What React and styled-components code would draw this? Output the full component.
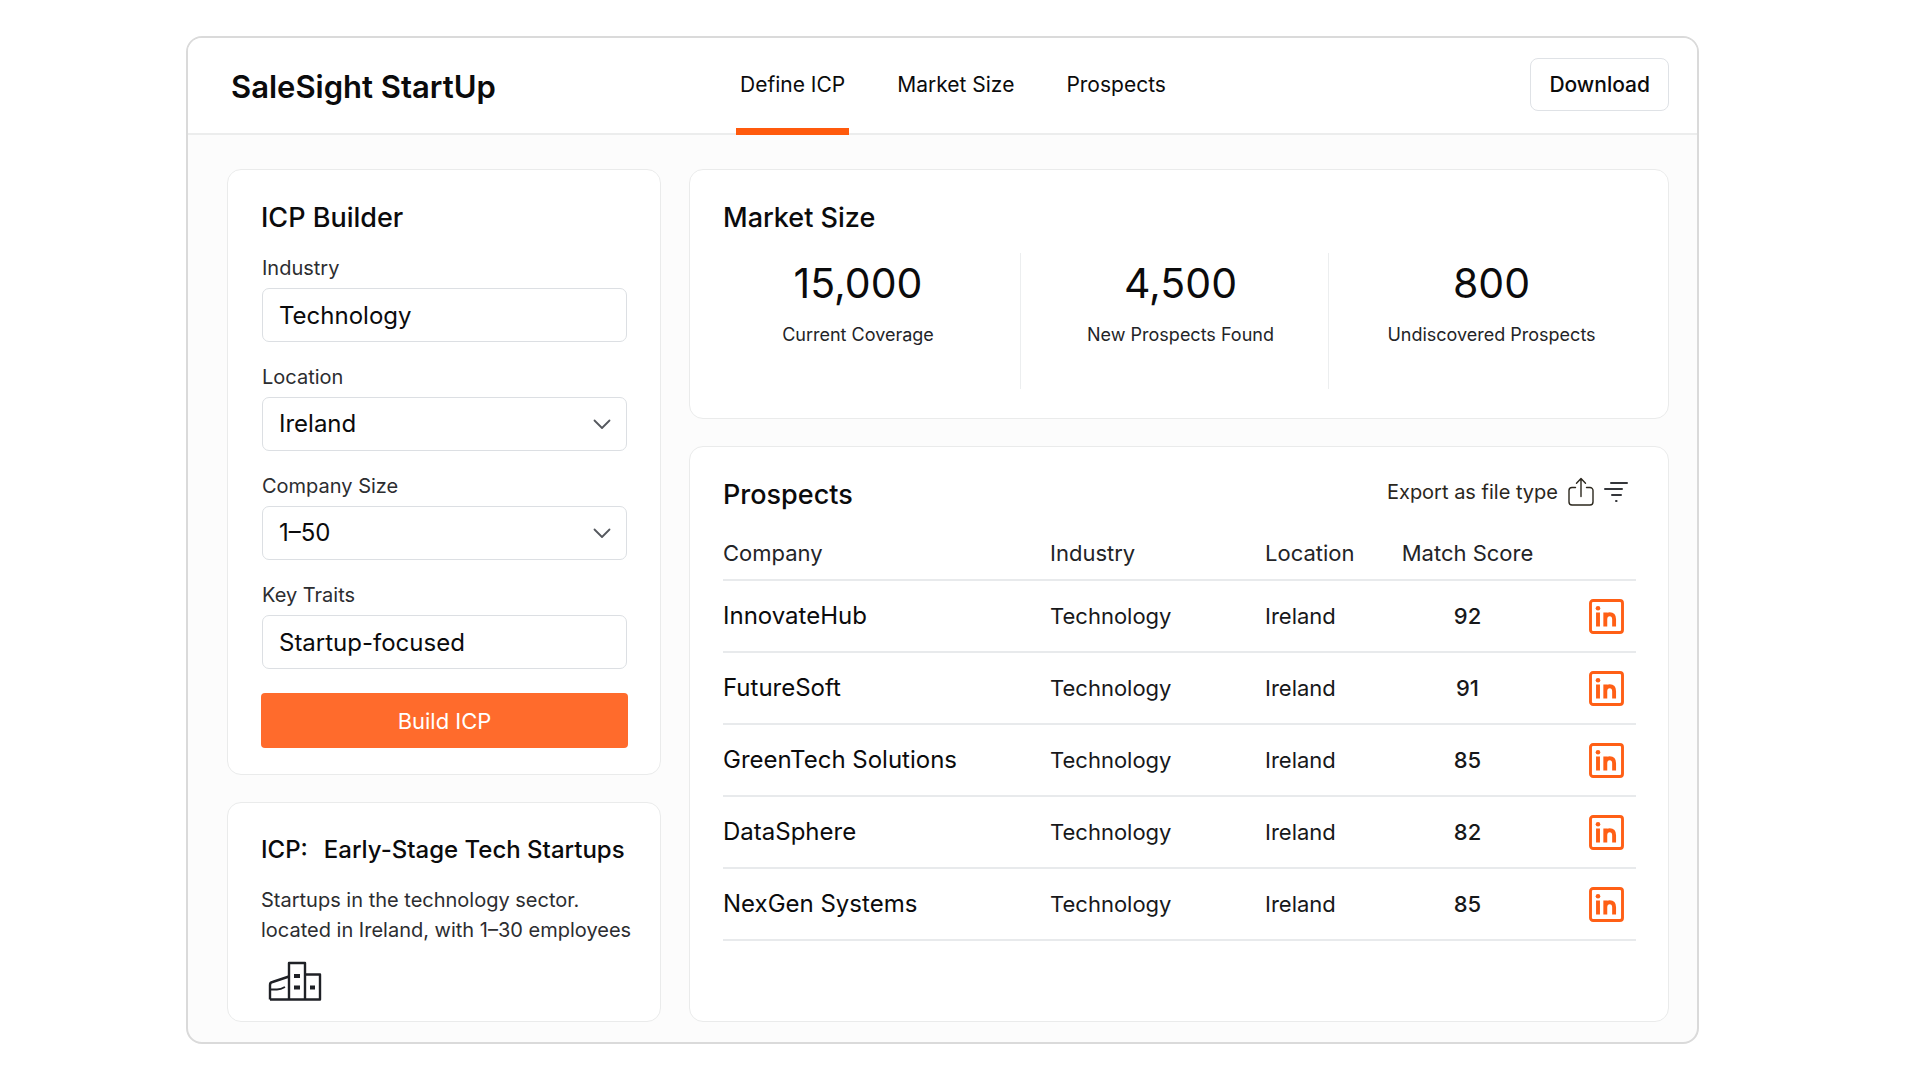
import React, { useState } from 'react';
import styled, { createGlobalStyle } from 'styled-components';

const GlobalStyle = createGlobalStyle`
	* {
		box-sizing: border-box;
	}
	body {
		margin: 0;
		background: #fff;
		color: #0b0b0c;
		font-family: Inter, 'Liberation Sans', sans-serif;
		font-size: 20px;
		line-height: 28px;
	}
	button, input, select {
		font: inherit;
		color: inherit;
	}
	h1, h2, p, dl, dd {
		margin: 0;
	}
`;

const Page = styled.div`
	display: flex;
	min-height: 100vh;
	padding: 36px 221px 36px 186px;
`;

const Frame = styled.div`
	flex: 1;
	display: flex;
	flex-direction: column;
	border: 2px solid #dadada;
	border-radius: 16px;
	background: #fcfcfc;
	overflow: hidden;
`;

const Header = styled.header`
	display: grid;
	grid-template-columns: minmax(auto, 505px) 1fr auto;
	height: 97px;
	padding: 0 28px 0 43px;
	border-bottom: 2px solid #eceded;
	background: #fff;
`;

const Brand = styled.h1`
	align-self: center;
	padding-top: 2px;
	font-size: 31px;
	line-height: 40px;
	font-weight: 600;
`;

const Nav = styled.nav`
	display: flex;
	gap: 44px;
	margin-bottom: -2px;
`;

const NavLink = styled.a`
	display: flex;
	align-items: center;
	padding: 0 4px;
	border-top: 4px solid transparent;
	border-bottom: 7px solid ${({ $active }) => ($active ? '#ff5a0d' : 'transparent')};
	color: inherit;
	font-size: 21px;
	text-decoration: none;
`;

const DownloadButton = styled.button`
	align-self: center;
	height: 53px;
	padding: 0 18px;
	border: 1px solid #dfe2e6;
	border-radius: 8px;
	background: #fff;
	font-size: 21px;
	font-weight: 500;
	margin-bottom: 2px;
`;

const Body = styled.main`
	flex: 1;
	display: grid;
	grid-template-columns: minmax(0, 434fr) minmax(0, 980fr);
	gap: 28px;
	padding: 34px 28px 20px 39px;
`;

const Column = styled.div`
	display: flex;
	flex-direction: column;
	gap: 27px;
`;

const Card = styled.section`
	flex: ${({ $grow }) => ($grow ? 1 : 'none')};
	padding: 30px 32px 18px 33px;
	border: 1px solid #eaebeb;
	border-radius: 14px;
	background: #fff;
`;

const CardTitle = styled.h2`
	font-size: 27px;
	line-height: 36px;
	font-weight: 500;
`;

const Form = styled.form`
	display: flex;
	flex-direction: column;
	gap: 21px;
	padding: 18px 0 8px;
`;

const Field = styled.div`
	display: flex;
	flex-direction: column;
	gap: 6px;
	padding: 0 1px;
`;

const Label = styled.label`
	color: #2c2d30;
	font-size: 20px;
`;

const controlStyle = `
	width: 100%;
	height: 54px;
	padding: 0 16px;
	border: 1px solid #dcdfe3;
	border-radius: 7px;
	background: #fff;
	font-size: 24px;
`;

const TextInput = styled.input`
	${controlStyle}
`;

const SelectWrap = styled.div`
	position: relative;
	display: flex;
	> svg {
		position: absolute;
		right: 16px;
		top: 22px;
		pointer-events: none;
	}
`;

const Select = styled.select`
	${controlStyle}
	appearance: none;
`;

const BuildButton = styled.button`
	height: 55px;
	margin-top: 3px;
	border: 0;
	border-radius: 4px;
	background: #ff6b2c;
	color: #fff;
	font-size: 22px;
`;

const SummaryTitle = styled.h2`
	display: flex;
	gap: 16px;
	font-size: 24px;
	line-height: 34px;
	font-weight: 500;
	white-space: nowrap;
`;

const SummaryText = styled.p`
	padding: 18px 0 16px;
	color: #2c2d30;
	font-size: 20px;
	line-height: 30px;
	white-space: nowrap;
`;

const SummaryIcon = styled.div`
	display: flex;
	padding-left: 7px;
`;

const Stats = styled.dl`
	display: grid;
	grid-template-columns: 325fr 308fr 314fr;
	margin: 17px -6px 11px -28px;
`;

const Stat = styled.div`
	display: flex;
	flex-direction: column-reverse;
	justify-content: flex-end;
	align-items: center;
	gap: 14px;
	height: 136px;
	padding: 6px 0 0 12px;
	border-left: 1px solid #eceeef;
	&:first-child {
		padding-left: 0;
		border-left-color: transparent;
	}
`;

const StatLabel = styled.dt`
	color: #232427;
	font-size: 18px;
`;

const StatValue = styled.dd`
	font-size: 41px;
	line-height: 48px;
`;

const CardHead = styled.div`
	display: flex;
	justify-content: space-between;
	align-items: center;
`;

const Tools = styled.div`
	display: flex;
	align-items: center;
	gap: 10px;
	padding: 0 8px 6px 0;
`;

const ToolButton = styled.button`
	display: flex;
	align-items: center;
	gap: 10px;
	padding: 0;
	border: 0;
	background: none;
	color: #2b271d;
`;

const Table = styled.table`
	width: 100%;
	margin-top: 17px;
	border-collapse: collapse;
	table-layout: fixed;
`;

const HeadCell = styled.th`
	width: ${({ $width }) => $width || 'auto'};
	height: 50px;
	padding: 0 0 4px;
	border-bottom: 2px solid #e8eaec;
	color: #232427;
	font-size: 22px;
	font-weight: 400;
	text-align: ${({ $align }) => $align || 'left'};
	white-space: nowrap;
`;

const Cell = styled.td`
	height: 72px;
	padding: 0;
	border-bottom: 2px solid #e8eaec;
	color: #17181a;
	font-size: 22px;
	text-align: ${({ $align }) => $align || 'left'};
`;

const CompanyCell = styled (Cell)`
	color: #0b0b0c;
	font-size: 24px;
`;

const ScoreCell = styled (Cell)`
	font-weight: 500;
`;

const ProfileLink = styled.a`
	display: inline-flex;
	vertical-align: middle;
	margin-right: 12px;
`;

const Chevron = () => (
	<svg width="18" height="11" viewBox="0 0 18 11" fill="none" stroke="#55585e" strokeWidth="1.8" strokeLinecap="round" strokeLinejoin="round">
		<path d="M1.5 1.5 9 9l7.5-7.5"/>
	</svg>
);

const ShareIcon = () => (
	<svg width="26" height="30" viewBox="0 0 26 30" fill="none" stroke="#2b271d" strokeWidth="1.4" strokeLinecap="round" strokeLinejoin="round">
		<path d="M7.5 10.5H4a3 3 0 0 0-3 3V25a3 3 0 0 0 3 3h18a3 3 0 0 0 3-3V13.500a3 3 0 0 0-3-3h-3.500"/>
		<path d="M13 19.500V2M8.500 6.200 13 1.600l4.500 4.600"/>
	</svg>
);

const FilterIcon = () => (
	<svg width="24" height="22" viewBox="0 0 24 22" fill="none" stroke="#34363a" strokeWidth="2" strokeLinecap="round">
		<path d="M7 2h16M1 8h17M8 14h9M12 20h.6"/>
	</svg>
);

const LinkedInIcon = () => (
	<svg width="35" height="35" viewBox="0 0 35 35" fill="none" stroke="#ff5f15">
		<rect x="1.5" y="1.5" width="32" height="32" rx="2.6" strokeWidth="2.9"/>
		<path d="M9 13.6v14M16.300 13.600v14M16.300 20.300c0-3.200 1.700-5 4.400-5s4.400 1.700 4.400 5v7.300" strokeWidth="3.9"/>
		<circle cx="9" cy="9.3" r="2.3" fill="#ff5f15" stroke="none"/>
	</svg>
);

const BuildingsIcon = () => (
	<svg width="54" height="40" viewBox="0 0 54 40" fill="none" stroke="#1f2126" strokeWidth="2.4" strokeLinejoin="round">
		<path d="M2 38.500h50V13.500H38"/>
		<path d="M21 38.500V2h16v36.500"/>
		<path d="M21 15.500 4.500 21A3 3 0 0 0 2 24v14.500"/>
		<path d="M2 28.500h7c3 0 5-.8 8-2.500" strokeWidth="1.8"/>
		<path d="M26 15h6M26 26.500h6M42 26.500h5" strokeWidth="4"/>
	</svg>
);

const navItems = ['Define ICP', 'Market Size', 'Prospects'];

const stats = [
	{ value : '15,000', label : 'Current Coverage' },
	{ value : '4,500', label : 'New Prospects Found' },
	{ value : '800', label : 'Undiscovered Prospects' },
];

const prospects = [
	{ company : 'InnovateHub', industry : 'Technology', location : 'Ireland', score : 92 },
	{ company : 'FutureSoft', industry : 'Technology', location : 'Ireland', score : 91 },
	{ company : 'GreenTech Solutions', industry : 'Technology', location : 'Ireland', score : 85 },
	{ company : 'DataSphere', industry : 'Technology', location : 'Ireland', score : 82 },
	{ company : 'NexGen Systems', industry : 'Technology', location : 'Ireland', score : 85 },
];

const IcpBuilder = () => {
	const [industry, setIndustry] = useState ('Technology');
	const [traits, setTraits] = useState ('Startup-focused');
	return (
		<Card>
			<CardTitle>ICP Builder</CardTitle>
			<Form onSubmit={ (e) => e.preventDefault () }>
				<Field>
					<Label htmlFor="industry">Industry</Label>
					<TextInput id="industry" value={ industry } onChange={ (e) => setIndustry (e.target.value) }/>
				</Field>
				<Field>
					<Label htmlFor="location">Location</Label>
					<SelectWrap>
						<Select id="location" defaultValue="Ireland">
							<option>Ireland</option>
						</Select>
						<Chevron/>
					</SelectWrap>
				</Field>
				<Field>
					<Label htmlFor="size">Company Size</Label>
					<SelectWrap>
						<Select id="size" defaultValue="1–50">
							<option>1–50</option>
						</Select>
						<Chevron/>
					</SelectWrap>
				</Field>
				<Field>
					<Label htmlFor="traits">Key Traits</Label>
					<TextInput id="traits" value={ traits } onChange={ (e) => setTraits (e.target.value) }/>
				</Field>
				<BuildButton type="submit">Build ICP</BuildButton>
			</Form>
		</Card>
	);
};

const ProspectsCard = () => (
	<Card $grow>
		<CardHead>
			<CardTitle>Prospects</CardTitle>
			<Tools>
				<ToolButton type="button">Export as file type <ShareIcon/></ToolButton>
				<ToolButton type="button" aria-label="Filter"><FilterIcon/></ToolButton>
			</Tools>
		</CardHead>
		<Table>
			<thead>
				<tr>
					<HeadCell>Company</HeadCell>
					<HeadCell $width="215px">Industry</HeadCell>
					<HeadCell $width="134px">Location</HeadCell>
					<HeadCell $width="137px" $align="center">Match Score</HeadCell>
					<HeadCell $width="100px" aria-label="Profile"/>
				</tr>
			</thead>
			<tbody>
				{ prospects.map ((row) => (
					<tr key={ row.company }>
						<CompanyCell>{ row.company }</CompanyCell>
						<Cell>{ row.industry }</Cell>
						<Cell>{ row.location }</Cell>
						<ScoreCell $align="center">{ row.score }</ScoreCell>
						<Cell $align="right">
							<ProfileLink href="#" aria-label={ `${row.company} on LinkedIn` }><LinkedInIcon/></ProfileLink>
						</Cell>
					</tr>
				)) }
			</tbody>
		</Table>
	</Card>
);

const App = () => (
	<Page>
		<GlobalStyle/>
		<Frame>
			<Header>
				<Brand>SaleSight StartUp</Brand>
				<Nav>
					{ navItems.map ((item, i) => (
						<NavLink key={ item } href="#" $active={ i === 0 }>{ item }</NavLink>
					)) }
				</Nav>
				<DownloadButton type="button">Download</DownloadButton>
			</Header>
			<Body>
				<Column>
					<IcpBuilder/>
					<Card $grow>
						<SummaryTitle><span>ICP:</span><span>Early-Stage Tech Startups</span></SummaryTitle>
						<SummaryText>
							Startups in the technology sector.<br/>
							located in Ireland, with 1–30 employees
						</SummaryText>
						<SummaryIcon>
							<BuildingsIcon/>
						</SummaryIcon>
					</Card>
				</Column>
				<Column>
					<Card>
						<CardTitle>Market Size</CardTitle>
						<Stats>
							{ stats.map ((stat) => (
								<Stat key={ stat.label }>
									<StatLabel>{ stat.label }</StatLabel>
									<StatValue>{ stat.value }</StatValue>
								</Stat>
							)) }
						</Stats>
					</Card>
					<ProspectsCard/>
				</Column>
			</Body>
		</Frame>
	</Page>
);

export default App;
